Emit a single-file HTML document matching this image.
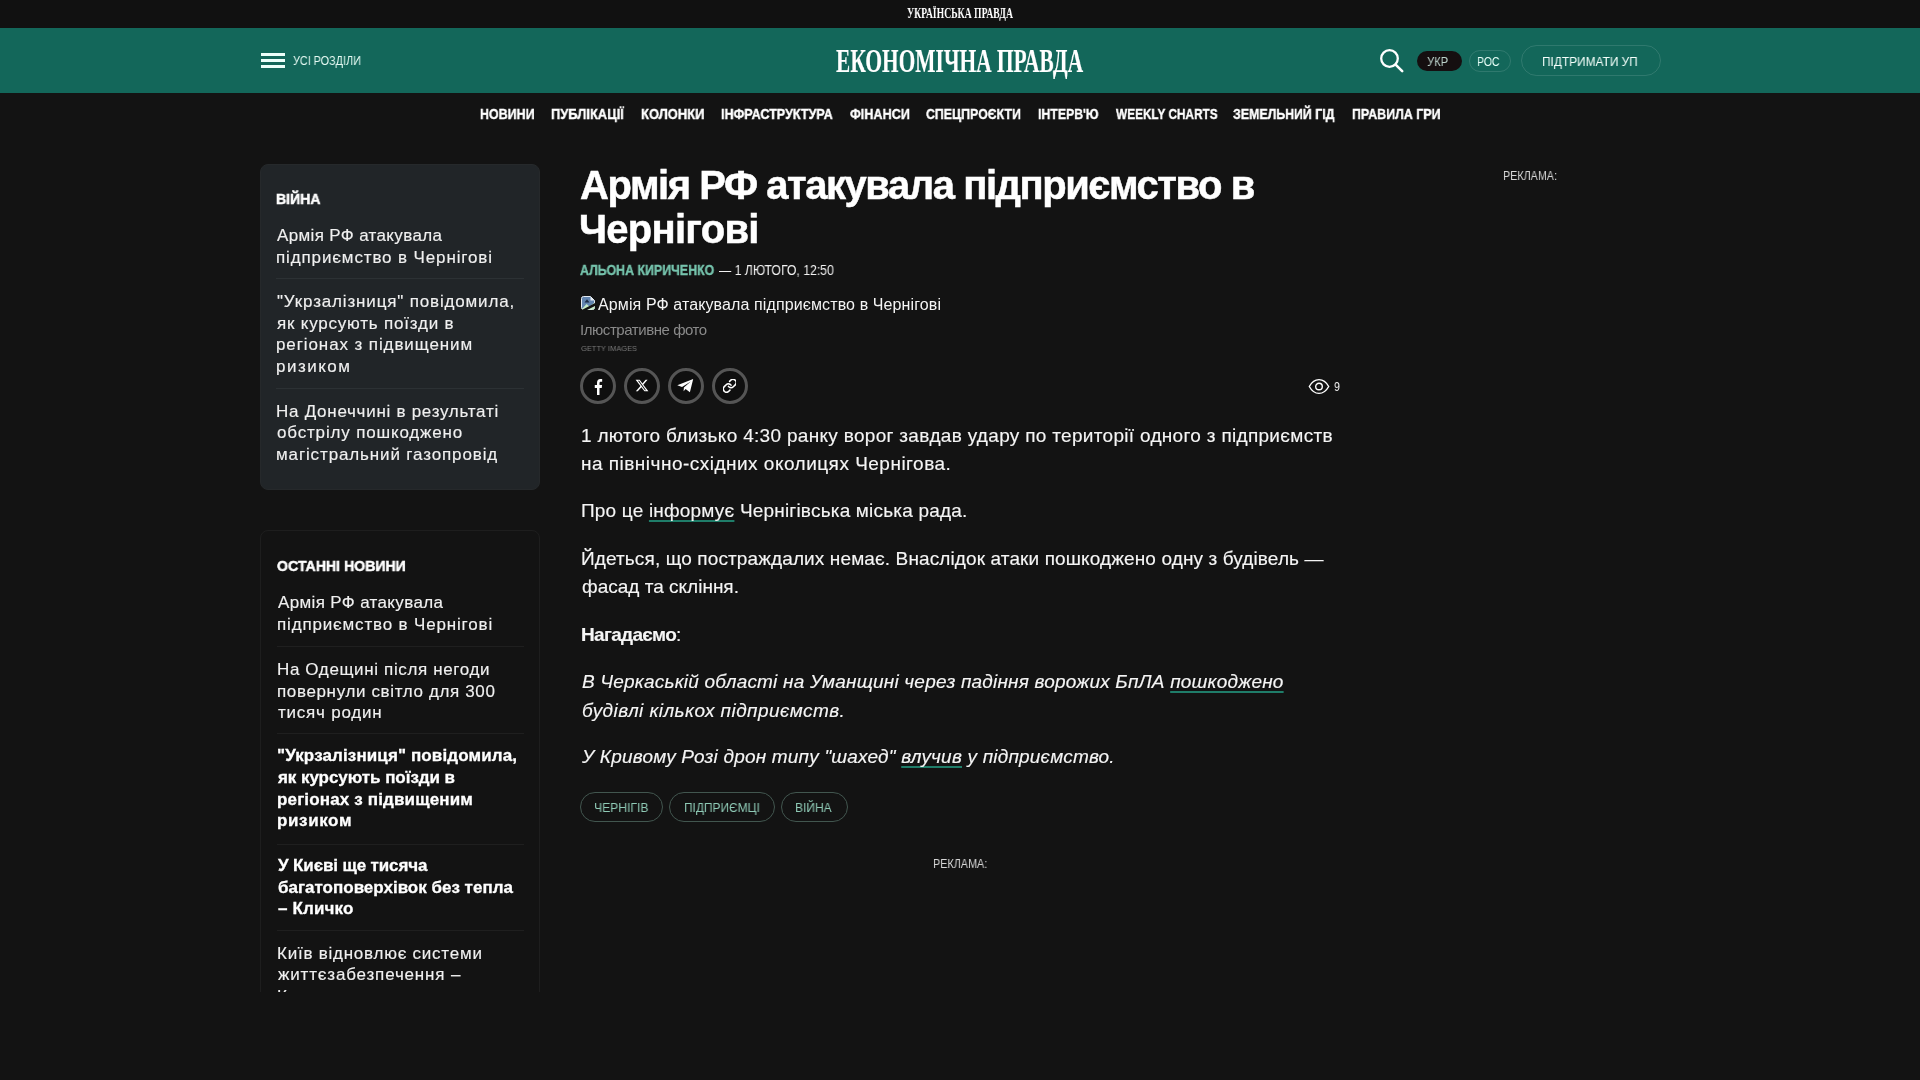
<!DOCTYPE html>
<html lang="uk">
<head>
<meta charset="utf-8">
<title>Армія РФ атакувала підприємство в Чернігові - Економічна правда</title>
<style>
*{box-sizing:border-box;margin:0;padding:0}
html,body{width:1920px;height:1080px;overflow:hidden;background:#131313;color:#fff;font-family:"Liberation Sans",sans-serif}
.t{position:absolute;white-space:nowrap;transform-origin:0 0;will-change:transform}
#topbar{position:absolute;left:0;top:0;width:1920px;height:28px;background:#111111}
#header{position:absolute;left:0;top:28px;width:1920px;height:65px;background:#13675a}
.bar{position:absolute;left:261px;width:24px;height:3px;background:#ecfffa}
#search{position:absolute;left:1379px;top:48px}
#ukr{position:absolute;left:1417px;top:51px;width:45px;height:20px;border-radius:10px;background:#150f10}
#ros{position:absolute;left:1469px;top:50px;width:42px;height:22px;border-radius:11px;border:1px solid rgba(255,255,255,0.12)}
#support{position:absolute;left:1521px;top:45px;width:140px;height:31px;border-radius:16px;border:1px solid rgba(255,255,255,0.12)}
.box1{position:absolute;left:260px;top:164px;width:280px;height:326px;background:#212528;border:1px solid #26292b;border-radius:8px}
.sep1{position:absolute;left:276px;width:248px;height:1px;background:#2c3134}
.clip{position:absolute;left:0;top:0;width:1920px;height:992px;overflow:hidden}
.box2{position:absolute;left:260px;top:530px;width:280px;height:600px;border:1px solid #1e1e1e;border-radius:8px}
.sep2{position:absolute;left:277px;width:247px;height:1px;background:#1f1f1f}
.share{position:absolute;top:368px;width:36px;height:36px;border:3px solid #555;border-radius:50%;background:#0f0f0f}
.share svg{position:absolute}
.tag{position:absolute;top:792px;height:30px;border:1px solid #42564f;border-radius:15px}
</style>
</head>
<body>
<div id="topbar"></div>
<div id="header"></div>
<div class="bar" style="top:53px"></div>
<div class="bar" style="top:59px"></div>
<div class="bar" style="top:65px"></div>
<svg id="search" width="26" height="26" viewBox="0 0 26 26"><circle cx="10.5" cy="10.5" r="8.3" fill="none" stroke="#fff" stroke-width="2.3"/><line x1="16.6" y1="16.6" x2="23.2" y2="23.2" stroke="#fff" stroke-width="2.6" stroke-linecap="round"/></svg>
<div id="ukr"></div>
<div id="ros"></div>
<div id="support"></div>

<div class="box1"></div>
<div class="sep1" style="top:278px"></div>
<div class="sep1" style="top:388px"></div>

<div class="clip">
<div class="box2"></div>
<div class="sep2" style="top:646px"></div>
<div class="sep2" style="top:733px"></div>
<div class="sep2" style="top:844px"></div>
<div class="sep2" style="top:930px"></div>
<div class="t" style="left:277.60px;top:591.80px;font:17px/22px 'Liberation Sans',sans-serif;color:#f0f0f0;-webkit-text-stroke:0.15px #f0f0f0;letter-spacing:0.353px">Армія РФ атакувала</div>
<div class="t" style="left:276.60px;top:614.00px;font:17px/22px 'Liberation Sans',sans-serif;color:#f0f0f0;-webkit-text-stroke:0.15px #f0f0f0;letter-spacing:0.835px">підприємство в Чернігові</div>
<div class="t" style="left:276.60px;top:658.70px;font:17px/22px 'Liberation Sans',sans-serif;color:#f0f0f0;-webkit-text-stroke:0.15px #f0f0f0;letter-spacing:0.636px">На Одещині після негоди</div>
<div class="t" style="left:276.60px;top:680.50px;font:17px/22px 'Liberation Sans',sans-serif;color:#f0f0f0;-webkit-text-stroke:0.15px #f0f0f0;letter-spacing:0.639px">повернули світло для 300</div>
<div class="t" style="left:277.60px;top:702.00px;font:17px/22px 'Liberation Sans',sans-serif;color:#f0f0f0;-webkit-text-stroke:0.15px #f0f0f0;letter-spacing:0.780px">тисяч родин</div>
<div class="t" style="left:276.60px;top:745.25px;font:bold 17px/22px 'Liberation Sans',sans-serif;color:#fff;-webkit-text-stroke:0.3px #fff;letter-spacing:0.120px">"Укрзалізниця" повідомила,</div>
<div class="t" style="left:277.60px;top:767.00px;font:bold 17px/22px 'Liberation Sans',sans-serif;color:#fff;-webkit-text-stroke:0.3px #fff;letter-spacing:-0.053px">як курсують поїзди в</div>
<div class="t" style="left:276.60px;top:789.00px;font:bold 17px/22px 'Liberation Sans',sans-serif;color:#fff;-webkit-text-stroke:0.3px #fff;letter-spacing:0.150px">регіонах з підвищеним</div>
<div class="t" style="left:276.60px;top:810.25px;font:bold 17px/22px 'Liberation Sans',sans-serif;color:#fff;-webkit-text-stroke:0.3px #fff;letter-spacing:0.617px">ризиком</div>
<div class="t" style="left:277.60px;top:855.25px;font:bold 17px/22px 'Liberation Sans',sans-serif;color:#fff;-webkit-text-stroke:0.3px #fff;letter-spacing:-0.125px">У Києві ще тисяча</div>
<div class="t" style="left:277.60px;top:876.50px;font:bold 17px/22px 'Liberation Sans',sans-serif;color:#fff;-webkit-text-stroke:0.3px #fff">багатоповерхівок без тепла</div>
<div class="t" style="left:277.60px;top:897.75px;font:bold 17px/22px 'Liberation Sans',sans-serif;color:#fff;-webkit-text-stroke:0.3px #fff;letter-spacing:0.143px">– Кличко</div>
<div class="t" style="left:276.60px;top:942.75px;font:17px/22px 'Liberation Sans',sans-serif;color:#f0f0f0;-webkit-text-stroke:0.15px #f0f0f0;letter-spacing:0.762px">Київ відновлює системи</div>
<div class="t" style="left:277.60px;top:964.00px;font:17px/22px 'Liberation Sans',sans-serif;color:#f0f0f0;-webkit-text-stroke:0.15px #f0f0f0;letter-spacing:0.833px">життєзабезпечення –</div>
<div class="t" style="left:276.60px;top:986.00px;font:17px/22px 'Liberation Sans',sans-serif;color:#f0f0f0;-webkit-text-stroke:0.15px #f0f0f0;letter-spacing:1.200px">Кличко</div>
</div>

<svg style="position:absolute;left:580px;top:295px" width="16" height="16" viewBox="0 0 16 16"><path d="M1.5 3.5Q1.5 1.5 3.5 1.5H10.5L14.5 5.5V12.5Q14.5 14.5 12.5 14.5H3.5Q1.5 14.5 1.5 12.5Z" fill="#6285b0" stroke="#e4ebf2" stroke-width="1"/><path d="M2 14l4.5-5 3 2.5 5-4V13q0 1.5-1.5 1.5H3z" fill="#c6ecc8"/><path d="M4.5 7.5l2.5-3.2 2.5 3.2z" fill="#1b2d48"/><path d="M10.5 1.5v4h4" fill="#e4ebf2"/><path d="M0 16L16 7.5V10.5L5 16z" fill="#131313"/></svg>

<div class="share" style="left:580px"><svg style="left:11px;top:7.7px" width="8.6" height="16.5" viewBox="0 0 10 17" preserveAspectRatio="none"><path d="M6.4 17V9.3h2.6l.4-3.1H6.4V4.3c0-.9.3-1.5 1.6-1.5h1.5V.1C9.2.1 8.3 0 7.3 0 5 0 3.5 1.4 3.5 3.9v2.3H.9v3.1h2.6V17z" fill="#fff"/></svg></div>
<div class="share" style="left:624px"><svg style="left:8px;top:7px" width="14" height="15" viewBox="0 0 24 24"><path d="M18.2 2h3.4l-7.4 8.5L23 22h-6.8l-5.3-7-6.1 7H1.4l7.9-9.1L1 2h7l4.8 6.4zM17 20h1.9L7.1 3.9H5.1z" fill="#fff"/></svg></div>
<div class="share" style="left:668px"><svg style="left:6px;top:8px" width="17" height="14" viewBox="0 0 17 14"><path d="M0.3 6.3L16.2 0 12.9 13.2 8.6 9.9 6.6 12.3 6.9 8.6 13.8 2.4 5 7.9z" fill="#fff"/></svg></div>
<div class="share" style="left:712px"><svg style="left:7.7px;top:8.2px" width="13.5" height="13.5" viewBox="1.5 1.5 21 21"><g fill="none" stroke="#fff" stroke-width="2.5" stroke-linecap="round" stroke-linejoin="round"><path d="M10 13a5 5 0 0 0 7.54.54l3-3a5 5 0 0 0-7.07-7.07l-1.72 1.71"/><path d="M14 11a5 5 0 0 0-7.54-.54l-3 3a5 5 0 0 0 7.07 7.07l1.71-1.71"/></g></svg></div>

<svg style="position:absolute;left:1308px;top:378px" width="22" height="17" viewBox="0 0 22 17"><path d="M1.3 8.5C3.8 3.9 7.2 1.6 11 1.6s7.2 2.3 9.7 6.9c-2.5 4.6-5.9 6.9-9.7 6.9S3.8 13.1 1.3 8.5z" fill="none" stroke="#fff" stroke-width="1.4"/><circle cx="11" cy="8.5" r="3.3" fill="none" stroke="#fff" stroke-width="1.4"/></svg>

<div class="tag" style="left:580px;width:83px"></div>
<div class="tag" style="left:669px;width:106px"></div>
<div class="tag" style="left:781px;width:67px"></div>

<div class="t" style="left:907.20px;top:6.00px;font:bold 14px/16px 'Liberation Serif',serif;color:#fff;transform:scaleX(0.6922)">УКРАЇНСЬКА ПРАВДА</div>
<div class="t" style="left:293.00px;top:53.00px;font:13px/16px 'Liberation Sans',sans-serif;color:#e6faf3;transform:scaleX(0.8321)">УСІ РОЗДІЛИ</div>
<div class="t" style="left:835.80px;top:41.00px;font:bold 34px/40px 'Liberation Serif',serif;color:#fff;-webkit-text-stroke:0.15px #fff;transform:scaleX(0.6298)">ЕКОНОМІЧНА ПРАВДА</div>
<div class="t" style="left:1426.70px;top:54.00px;font:13px/16px 'Liberation Sans',sans-serif;color:#bcd2cb;transform:scaleX(0.8667)">УКР</div>
<div class="t" style="left:1477.20px;top:54.00px;font:13px/16px 'Liberation Sans',sans-serif;color:#e8fff8;transform:scaleX(0.8037)">РОС</div>
<div class="t" style="left:1542.39px;top:53.50px;font:13px/16px 'Liberation Sans',sans-serif;color:#f5fffb;transform:scaleX(0.9146)">ПІДТРИМАТИ УП</div>
<div class="t" style="left:480.20px;top:105.00px;font:bold 15px/18px 'Liberation Sans',sans-serif;color:#fff;-webkit-text-stroke:0.4px #fff;transform:scaleX(0.8303)">НОВИНИ</div>
<div class="t" style="left:551.20px;top:105.00px;font:bold 15px/18px 'Liberation Sans',sans-serif;color:#fff;-webkit-text-stroke:0.4px #fff;transform:scaleX(0.8612)">ПУБЛІКАЦІЇ</div>
<div class="t" style="left:641.30px;top:105.00px;font:bold 15px/18px 'Liberation Sans',sans-serif;color:#fff;-webkit-text-stroke:0.4px #fff;transform:scaleX(0.8630)">КОЛОНКИ</div>
<div class="t" style="left:721.20px;top:105.00px;font:bold 15px/18px 'Liberation Sans',sans-serif;color:#fff;-webkit-text-stroke:0.4px #fff;transform:scaleX(0.8381)">ІНФРАСТРУКТУРА</div>
<div class="t" style="left:850.20px;top:105.00px;font:bold 15px/18px 'Liberation Sans',sans-serif;color:#fff;-webkit-text-stroke:0.4px #fff;transform:scaleX(0.8423)">ФІНАНСИ</div>
<div class="t" style="left:926.30px;top:105.00px;font:bold 15px/18px 'Liberation Sans',sans-serif;color:#fff;-webkit-text-stroke:0.4px #fff;transform:scaleX(0.8252)">СПЕЦПРОЄКТИ</div>
<div class="t" style="left:1037.50px;top:105.00px;font:bold 15px/18px 'Liberation Sans',sans-serif;color:#fff;-webkit-text-stroke:0.4px #fff;transform:scaleX(0.8176)">ІНТЕРВ'Ю</div>
<div class="t" style="left:1116.09px;top:105.00px;font:bold 15px/18px 'Liberation Sans',sans-serif;color:#fff;-webkit-text-stroke:0.4px #fff;transform:scaleX(0.7862)">WEEKLY CHARTS</div>
<div class="t" style="left:1233.40px;top:105.00px;font:bold 15px/18px 'Liberation Sans',sans-serif;color:#fff;-webkit-text-stroke:0.4px #fff;transform:scaleX(0.8242)">ЗЕМЕЛЬНИЙ ГІД</div>
<div class="t" style="left:1351.60px;top:105.00px;font:bold 15px/18px 'Liberation Sans',sans-serif;color:#fff;-webkit-text-stroke:0.4px #fff;transform:scaleX(0.8290)">ПРАВИЛА ГРИ</div>
<div class="t" style="left:276.40px;top:190.10px;font:bold 15px/18px 'Liberation Sans',sans-serif;color:#fff;-webkit-text-stroke:0.5px #fff;transform:scaleX(0.9396)">ВІЙНА</div>
<div class="t" style="left:276.60px;top:224.60px;font:17px/22px 'Liberation Sans',sans-serif;color:#f0f0f0;-webkit-text-stroke:0.15px #f0f0f0;letter-spacing:0.353px">Армія РФ атакувала</div>
<div class="t" style="left:275.60px;top:246.80px;font:17px/22px 'Liberation Sans',sans-serif;color:#f0f0f0;-webkit-text-stroke:0.15px #f0f0f0;letter-spacing:0.870px">підприємство в Чернігові</div>
<div class="t" style="left:276.60px;top:290.60px;font:17px/22px 'Liberation Sans',sans-serif;color:#f0f0f0;-webkit-text-stroke:0.15px #f0f0f0;letter-spacing:0.840px">"Укрзалізниця" повідомила,</div>
<div class="t" style="left:276.60px;top:312.60px;font:17px/22px 'Liberation Sans',sans-serif;color:#f0f0f0;-webkit-text-stroke:0.15px #f0f0f0;letter-spacing:0.789px">як курсують поїзди в</div>
<div class="t" style="left:275.60px;top:334.40px;font:17px/22px 'Liberation Sans',sans-serif;color:#f0f0f0;-webkit-text-stroke:0.15px #f0f0f0;letter-spacing:0.900px">регіонах з підвищеним</div>
<div class="t" style="left:275.60px;top:356.20px;font:17px/22px 'Liberation Sans',sans-serif;color:#f0f0f0;-webkit-text-stroke:0.15px #f0f0f0;letter-spacing:1.500px">ризиком</div>
<div class="t" style="left:275.60px;top:400.90px;font:17px/22px 'Liberation Sans',sans-serif;color:#f0f0f0;-webkit-text-stroke:0.15px #f0f0f0;letter-spacing:0.729px">На Донеччині в результаті</div>
<div class="t" style="left:276.60px;top:422.30px;font:17px/22px 'Liberation Sans',sans-serif;color:#f0f0f0;-webkit-text-stroke:0.15px #f0f0f0;letter-spacing:0.833px">обстрілу пошкоджено</div>
<div class="t" style="left:275.60px;top:444.00px;font:17px/22px 'Liberation Sans',sans-serif;color:#f0f0f0;-webkit-text-stroke:0.15px #f0f0f0;letter-spacing:0.870px">магістральний газопровід</div>
<div class="t" style="left:277.40px;top:556.70px;font:bold 15px/18px 'Liberation Sans',sans-serif;color:#fff;-webkit-text-stroke:0.5px #fff;transform:scaleX(0.9409)">ОСТАННІ НОВИНИ</div>
<div class="t" style="left:579.60px;top:163.10px;font:bold 40px/44px 'Liberation Sans',sans-serif;color:#fff;-webkit-text-stroke:0.5px #fff;letter-spacing:-1.453px">Армія РФ атакувала підприємство в</div>
<div class="t" style="left:578.60px;top:206.80px;font:bold 40px/44px 'Liberation Sans',sans-serif;color:#fff;-webkit-text-stroke:0.5px #fff;letter-spacing:-0.750px">Чернігові</div>
<div class="t" style="left:580.30px;top:261.80px;font:bold 14px/16px 'Liberation Sans',sans-serif;color:#76c4ad;-webkit-text-stroke:0.35px #76c4ad;transform:scaleX(0.8849)">АЛЬОНА КИРИЧЕНКО</div>
<div class="t" style="left:719.10px;top:261.80px;font:14px/16px 'Liberation Sans',sans-serif;color:#f2f2f2;transform:scaleX(0.8735)">— 1 ЛЮТОГО, 12:50</div>
<div class="t" style="left:597.50px;top:296.00px;font:16px/18px 'Liberation Sans',sans-serif;color:#f4f4f4;letter-spacing:0.107px">Армія РФ атакувала підприємство в Чернігові</div>
<div class="t" style="left:579.80px;top:321.00px;font:15px/18px 'Liberation Sans',sans-serif;color:#8a8a8a;letter-spacing:-0.444px">Ілюстративне фото</div>
<div class="t" style="left:580.80px;top:343.80px;font:8px/10px 'Liberation Sans',sans-serif;color:#7a7a7a;transform:scaleX(0.9367)">GETTY IMAGES</div>
<div class="t" style="left:1334.20px;top:378.70px;font:13px/16px 'Liberation Sans',sans-serif;color:#f0f0f0;transform:scaleX(0.8143)">9</div>
<div class="t" style="left:580.50px;top:422.20px;font:19px/28px 'Liberation Sans',sans-serif;color:#f5f5f5;-webkit-text-stroke:0.15px #f5f5f5;letter-spacing:0.308px">1 лютого близько 4:30 ранку ворог завдав удару по території одного з підприємств</div>
<div class="t" style="left:580.50px;top:449.80px;font:19px/28px 'Liberation Sans',sans-serif;color:#f5f5f5;-webkit-text-stroke:0.15px #f5f5f5;letter-spacing:0.487px">на північно-східних околицях Чернігова.</div>
<div class="t" style="left:580.50px;top:497.20px;font:19px/28px 'Liberation Sans',sans-serif;color:#f5f5f5;-webkit-text-stroke:0.15px #f5f5f5;letter-spacing:0.190px">Про це <span style="text-decoration:underline;text-decoration-color:#1f7d69;text-decoration-thickness:2px;text-underline-offset:3px;text-decoration-skip-ink:none">інформує</span> Чернігівська міська рада.</div>
<div class="t" style="left:580.50px;top:544.90px;font:19px/28px 'Liberation Sans',sans-serif;color:#f5f5f5;-webkit-text-stroke:0.15px #f5f5f5;letter-spacing:0.117px">Йдеться, що постраждалих немає. Внаслідок атаки пошкоджено одну з будівель —</div>
<div class="t" style="left:581.50px;top:573.30px;font:19px/28px 'Liberation Sans',sans-serif;color:#f5f5f5;-webkit-text-stroke:0.15px #f5f5f5;letter-spacing:0.006px">фасад та скління.</div>
<div class="t" style="left:580.50px;top:621.10px;font:19px/28px 'Liberation Sans',sans-serif;color:#f5f5f5;-webkit-text-stroke:0.15px #f5f5f5;letter-spacing:-0.689px"><b>Нагадаємо</b>:</div>
<div class="t" style="left:581.50px;top:668.40px;font:italic 19px/28px 'Liberation Sans',sans-serif;color:#f5f5f5;-webkit-text-stroke:0.15px #f5f5f5;letter-spacing:0.196px">В Черкаській області на Уманщині через падіння ворожих БпЛА <span style="text-decoration:underline;text-decoration-color:#1f7d69;text-decoration-thickness:2px;text-underline-offset:3px;text-decoration-skip-ink:none">пошкоджено</span></div>
<div class="t" style="left:581.50px;top:696.70px;font:italic 19px/28px 'Liberation Sans',sans-serif;color:#f5f5f5;-webkit-text-stroke:0.15px #f5f5f5;letter-spacing:0.426px">будівлі кількох підприємств.</div>
<div class="t" style="left:581.50px;top:743.30px;font:italic 19px/28px 'Liberation Sans',sans-serif;color:#f5f5f5;-webkit-text-stroke:0.15px #f5f5f5;letter-spacing:0.194px">У Кривому Розі дрон типу "шахед" <span style="text-decoration:underline;text-decoration-color:#1f7d69;text-decoration-thickness:2px;text-underline-offset:3px;text-decoration-skip-ink:none">влучив</span> у підприємство.</div>
<div class="t" style="left:593.77px;top:800.00px;font:13px/16px 'Liberation Sans',sans-serif;color:#8fcab6;transform:scaleX(0.9333)">ЧЕРНІГІВ</div>
<div class="t" style="left:684.18px;top:800.00px;font:13px/16px 'Liberation Sans',sans-serif;color:#8fcab6;transform:scaleX(0.9185)">ПІДПРИЄМЦІ</div>
<div class="t" style="left:795.48px;top:800.00px;font:13px/16px 'Liberation Sans',sans-serif;color:#8fcab6;transform:scaleX(0.9231)">ВІЙНА</div>
<div class="t" style="left:932.85px;top:857.00px;font:12px/14px 'Liberation Sans',sans-serif;color:#d6d6d6;transform:scaleX(0.9017)">РЕКЛАМА:</div>
<div class="t" style="left:1503.10px;top:168.80px;font:12px/14px 'Liberation Sans',sans-serif;color:#d6d6d6;transform:scaleX(0.8966)">РЕКЛАМА:</div>
</body>
</html>
